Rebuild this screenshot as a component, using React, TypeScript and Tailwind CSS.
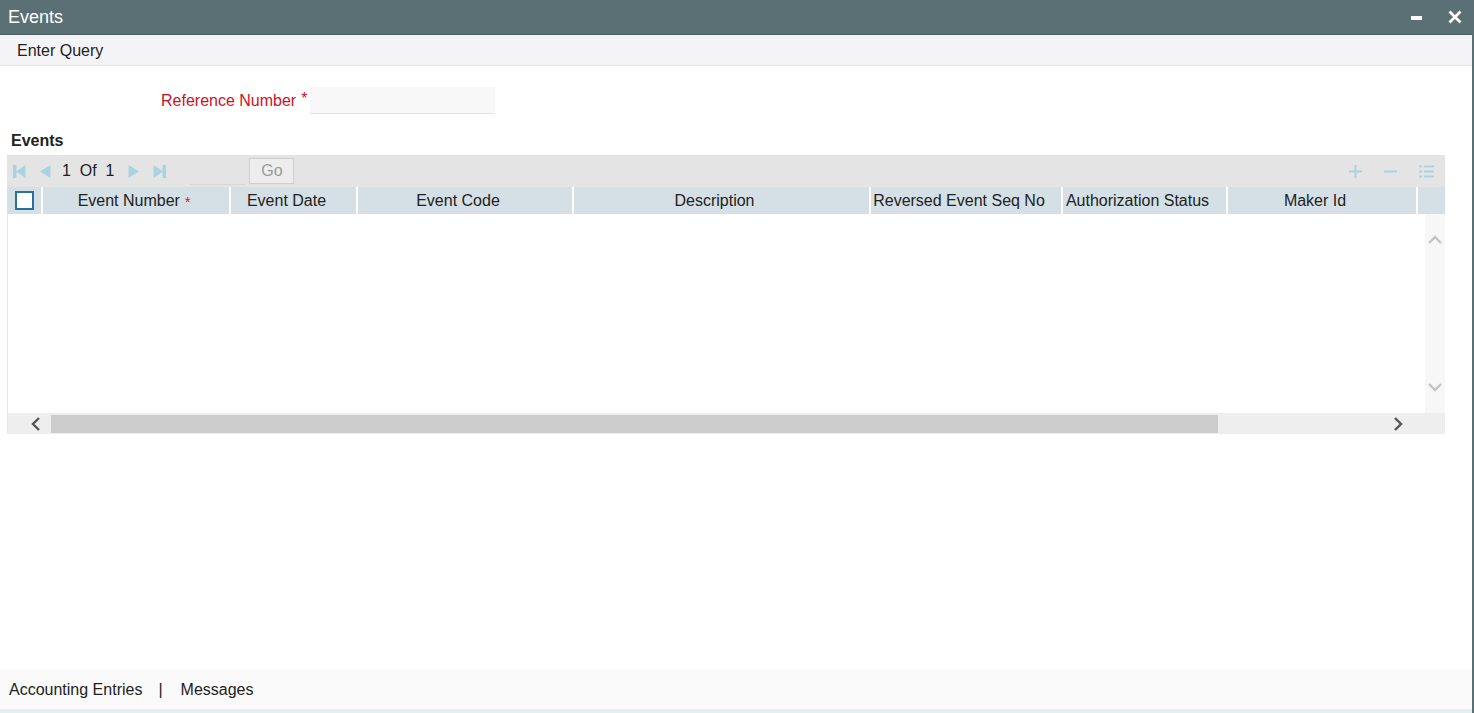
import type { JSX } from 'react';

const COLS: { label: string; w: string; req?: boolean }[] = [
  { label: 'Event Number', w: 'w-[188px] pr-[4px]', req: true },
  { label: 'Event Date', w: 'w-[127px] pr-[14px]' },
  { label: 'Event Code', w: 'w-[216px] pr-[14px]' },
  { label: 'Description', w: 'w-[297px] pr-[14px]' },
  { label: 'Reversed Event Seq No', w: 'w-[192px] pr-[14px]' },
  { label: 'Authorization Status', w: 'w-[165px] pr-[14px]' },
  { label: 'Maker Id', w: 'w-[190px] pr-[14px]' },
];

function PagerIcon({ kind }: { kind: 'first' | 'prev' | 'next' | 'last' }): JSX.Element {
  const fill = '#a9d3e3';
  return (
    <svg width="14" height="15" viewBox="0 0 14 15">
      {kind === 'first' && (
        <>
          <rect x="1" y="1" width="3.5" height="13" fill={fill} />
          <polygon points="13.5,1 13.5,14 4,7.5" fill={fill} />
        </>
      )}
      {kind === 'prev' && <polygon points="12.5,1 12.5,14 2,7.5" fill={fill} />}
      {kind === 'next' && <polygon points="1.5,1 1.5,14 12,7.5" fill={fill} />}
      {kind === 'last' && (
        <>
          <polygon points="0.5,1 0.5,14 10,7.5" fill={fill} />
          <rect x="9.5" y="1" width="3.5" height="13" fill={fill} />
        </>
      )}
    </svg>
  );
}

function Chevron({ dir }: { dir: 'up' | 'down' | 'left' | 'right' }): JSX.Element {
  const pts = {
    up: '2,10 8,4 14,10',
    down: '2,5 8,11 14,5',
    left: '10,2 4,8 10,14',
    right: '6,2 12,8 6,14',
  }[dir];
  const color = dir === 'up' || dir === 'down' ? '#c4c4c4' : '#555555';
  return (
    <svg width="16" height="16" viewBox="0 0 16 16">
      <polyline points={pts} fill="none" stroke={color} strokeWidth="2.4" />
    </svg>
  );
}

export default function App(): JSX.Element {
  return (
    <div className="w-[1474px] h-[713px] flex flex-col bg-white font-['Liberation_Sans',Arial,sans-serif] text-[16px] text-[#222] border-r-2 border-[#5a6e73] overflow-hidden">
      {/* title bar */}
      <div className="h-[35px] shrink-0 bg-[#5a7075] flex items-center justify-between pl-[8px] pr-[10px] border-b border-[#4a5e63]">
        <span className="text-white text-[18px]">Events</span>
        <div className="flex items-center gap-[26px]">
          <span className="block w-[11px] h-[4px] bg-white mt-[2px]" />
          <svg width="14" height="14" viewBox="0 0 14 14">
            <path d="M1.5 1.5 L12.5 12.5 M12.5 1.5 L1.5 12.5" stroke="white" strokeWidth="2.8" />
          </svg>
        </div>
      </div>

      {/* toolbar */}
      <div className="h-[31px] shrink-0 bg-[#f4f4f7] border-b border-[#e6e6ea] flex items-center pl-[17px] pt-[1px]">
        Enter Query
      </div>

      <div className="flex-1 flex flex-col pl-[7px] pr-[28px]">
        {/* reference number */}
        <div className="flex items-center mt-[21px] h-[27px] pl-[154px]">
          <span className="text-[#d0101e]">Reference Number</span>
          <span className="text-[#d0101e] ml-[5px] -mt-[4px]">*</span>
          <div className="ml-[3px] w-[185px] h-[27px] bg-[#f8f8f8] border-b border-[#e3e3e3]" />
        </div>

        <div className="font-bold mt-[17px] pl-[4px] h-[20px] leading-[20px]">Events</div>

        {/* grid */}
        <div className="mt-[4px] w-[1438px]">
          <div className="h-[32px] bg-[#e4e4e4] flex items-center">
            <div className="flex items-center gap-[5px] pl-[5px]">
              <PagerIcon kind="first" />
              <span className="ml-[7px]"><PagerIcon kind="prev" /></span>
            </div>
            <span className="ml-[10px] whitespace-pre">1  Of  1</span>
            <div className="flex items-center gap-[12px] ml-[13px]">
              <PagerIcon kind="next" />
              <PagerIcon kind="last" />
            </div>
            <div className="ml-[23px] w-[55px] h-[28px] border-b border-[#d6d6d6] bg-[#e4e4e4]" />
            <div className="ml-[4px] w-[45px] h-[26px] border border-[#cfcfcf] bg-[#ededed] text-[#9a9a9a] flex items-center justify-center">
              Go
            </div>
            <div className="ml-auto flex items-center gap-[20px] pr-[10px]">
              <svg width="15" height="15" viewBox="0 0 15 15">
                <path d="M7.5 1 V14 M1 7.5 H14" stroke="#a9d3e3" strokeWidth="2" />
              </svg>
              <svg width="15" height="15" viewBox="0 0 15 15">
                <path d="M1 7.5 H14" stroke="#a9d3e3" strokeWidth="2" />
              </svg>
              <svg width="17" height="15" viewBox="0 0 17 15">
                <path d="M1 2.5 H4 M6 2.5 H16 M1 7.5 H4 M6 7.5 H16 M1 12.5 H4 M6 12.5 H16" stroke="#a9d3e3" strokeWidth="2" />
              </svg>
            </div>
          </div>

          <div className="h-[27px] flex bg-[#d4e0e5]">
            <div className="w-[36px] shrink-0 flex items-center justify-center border-r-2 border-white">
              <div className="w-[19px] h-[19px] border-2 border-[#2a6f9e] bg-white" />
            </div>
            {COLS.map((c) => (
              <div
                key={c.label}
                className={c.w + ' shrink-0 flex items-center justify-center border-r-2 border-white whitespace-nowrap pt-[1px]'}
              >
                {c.label}
                {c.req && <span className="text-[#e0102a] text-[14px] ml-[5px] mt-[3px]">*</span>}
              </div>
            ))}
            <div className="flex-1" />
          </div>

          <div className="h-[199px] flex border-l border-[#e8e8e8]">
            <div className="flex-1" />
            <div className="w-[20px] bg-[#f7f7f7] flex flex-col items-center justify-between pt-[19px] pb-[18px]">
              <Chevron dir="up" />
              <Chevron dir="down" />
            </div>
          </div>

          <div className="h-[21px] bg-[#eeeeee] flex items-center border-l border-[#e8e8e8]">
            <div className="w-[43px] flex items-center justify-center pl-[14px]">
              <Chevron dir="left" />
            </div>
            <div className="w-[1167px] h-[18px] bg-[#cccccc]" />
            <div className="flex-1 flex justify-end pr-[40px]">
              <Chevron dir="right" />
            </div>
          </div>
        </div>
      </div>

      {/* footer */}
      <div className="h-[40px] shrink-0 bg-[#fafafa] flex items-center pl-[9px] pt-[1px]">
        <span>Accounting Entries</span>
        <span className="ml-[16px] mr-[18px]">|</span>
        <span>Messages</span>
      </div>
      <div className="h-[4px] shrink-0 bg-[#e5eff2]" />
    </div>
  );
}
